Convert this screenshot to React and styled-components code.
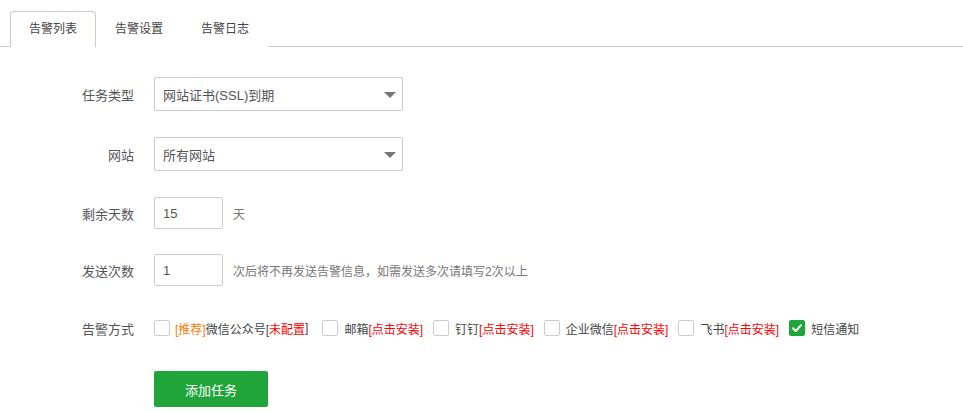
import React from 'react';
import styled, { createGlobalStyle } from 'styled-components';

const GlobalStyle = createGlobalStyle`
  body {
    margin: 0;
    background: #fff;
    font-family: "Liberation Sans", "Noto Sans CJK SC", sans-serif;
    color: #555;
  }
`

const Page = styled.div`
  width: 963px;
  height: 413px;
  padding-top: 11px;
  box-sizing: border-box;
`

const TabBar = styled.div`
  display: flex;
  padding-left: 10px;
  border-bottom: 1px solid #cdc9dc;
  height: 35px;
`

const Tab = styled.div`
  padding: 0 18px;
  height: 35px;
  line-height: 35px;
  font-size: 12px;
  color: #444;
  border: 1px solid ${props => props.active ? '#cdc9dc' : 'transparent'};
  border-bottom: none;
  border-radius: 4px 4px 0 0;
  background: #fff;
  margin-bottom: -1px;
`

const Form = styled.div`
  padding-top: 30px;
`

const Row = styled.div`
  display: flex;
  align-items: center;
  height: ${props => props.h || 34}px;
  margin-bottom: ${props => props.mb || 26}px;
`

const Label = styled.div`
  width: 134px;
  margin-right: 20px;
  text-align: right;
  font-size: 13px;
  color: #555;
`

const Select = styled.div`
  position: relative;
  width: 249px;
  height: 34px;
  box-sizing: border-box;
  border: 1px solid #ccc;
  border-radius: 2px;
  padding-left: 8px;
  display: flex;
  align-items: center;
  font-size: 13px;
  color: #555;
`

const Caret = styled.span`
  position: absolute;
  right: 6px;
  top: 14px;
  width: 0;
  height: 0;
  border-left: 6px solid transparent;
  border-right: 6px solid transparent;
  border-top: 6px solid #777;
`

const Input = styled.div`
  width: 69px;
  height: 32px;
  box-sizing: border-box;
  border: 1px solid #ccc;
  border-radius: 2px;
  padding-left: 8px;
  display: flex;
  align-items: center;
  font-size: 13px;
  color: #555;
`

const Unit = styled.span`
  margin-left: 10px;
  font-size: 12px;
  color: #777;
`

const Options = styled.div`
  display: flex;
  align-items: center;
`

const Option = styled.label`
  display: flex;
  align-items: center;
  margin-right: ${props => props.mr || 10}px;
  font-size: 12px;
  color: #444;
  white-space: nowrap;
`

const Box = styled.span`
  width: 16px;
  height: 16px;
  box-sizing: border-box;
  border: 1px solid ${props => props.checked ? '#20a53a' : '#ccc'};
  background: ${props => props.checked ? '#20a53a' : '#fff'};
  border-radius: 2px;
  margin-right: ${props => props.gap || 6}px;
  display: flex;
  align-items: center;
  justify-content: center;
`

const Tag = styled.span`
  color: ${props => props.color};
`

const Button = styled.button`
  margin-left: 154px;
  width: 114px;
  height: 36px;
  border: none;
  border-radius: 2px;
  background: #20a53a;
  color: #fff;
  font-size: 13px;
  font-family: inherit;
  cursor: pointer;
`

const Check = () => (
  <svg width="12" height="12" viewBox="0 0 12 12">
    <path d="M2 6.2 L4.8 9 L10 3.2" fill="none" stroke="#fff" strokeWidth="2" strokeLinecap="round" strokeLinejoin="round" />
  </svg>
)

const RED = '#f00'
const ORANGE = '#f7800b'

export default function App() {
  return (
    <Page>
      <GlobalStyle />
      <TabBar>
        <Tab active>告警列表</Tab>
        <Tab>告警设置</Tab>
        <Tab>告警日志</Tab>
      </TabBar>
      <Form>
        <Row>
          <Label>任务类型</Label>
          <Select>网站证书(SSL)到期<Caret /></Select>
        </Row>
        <Row>
          <Label>网站</Label>
          <Select>所有网站<Caret /></Select>
        </Row>
        <Row h={32} mb={25}>
          <Label>剩余天数</Label>
          <Input>15</Input>
          <Unit>天</Unit>
        </Row>
        <Row h={32} mb={26}>
          <Label>发送次数</Label>
          <Input>1</Input>
          <Unit>次后将不再发送告警信息，如需发送多次请填写2次以上</Unit>
        </Row>
        <Row h={32} mb={27}>
          <Label>告警方式</Label>
          <Options>
            <Option mr={14}><Box gap={5} /><Tag color={ORANGE}>[推荐]</Tag>微信公众号[<Tag color={RED}>未配置</Tag>]</Option>
            <Option><Box />邮箱<Tag color={RED}>[点击安装]</Tag></Option>
            <Option><Box />钉钉<Tag color={RED}>[点击安装]</Tag></Option>
            <Option><Box />企业微信<Tag color={RED}>[点击安装]</Tag></Option>
            <Option><Box />飞书<Tag color={RED}>[点击安装]</Tag></Option>
            <Option><Box checked><Check /></Box>短信通知</Option>
          </Options>
        </Row>
        <Button>添加任务</Button>
      </Form>
    </Page>
  )
}
